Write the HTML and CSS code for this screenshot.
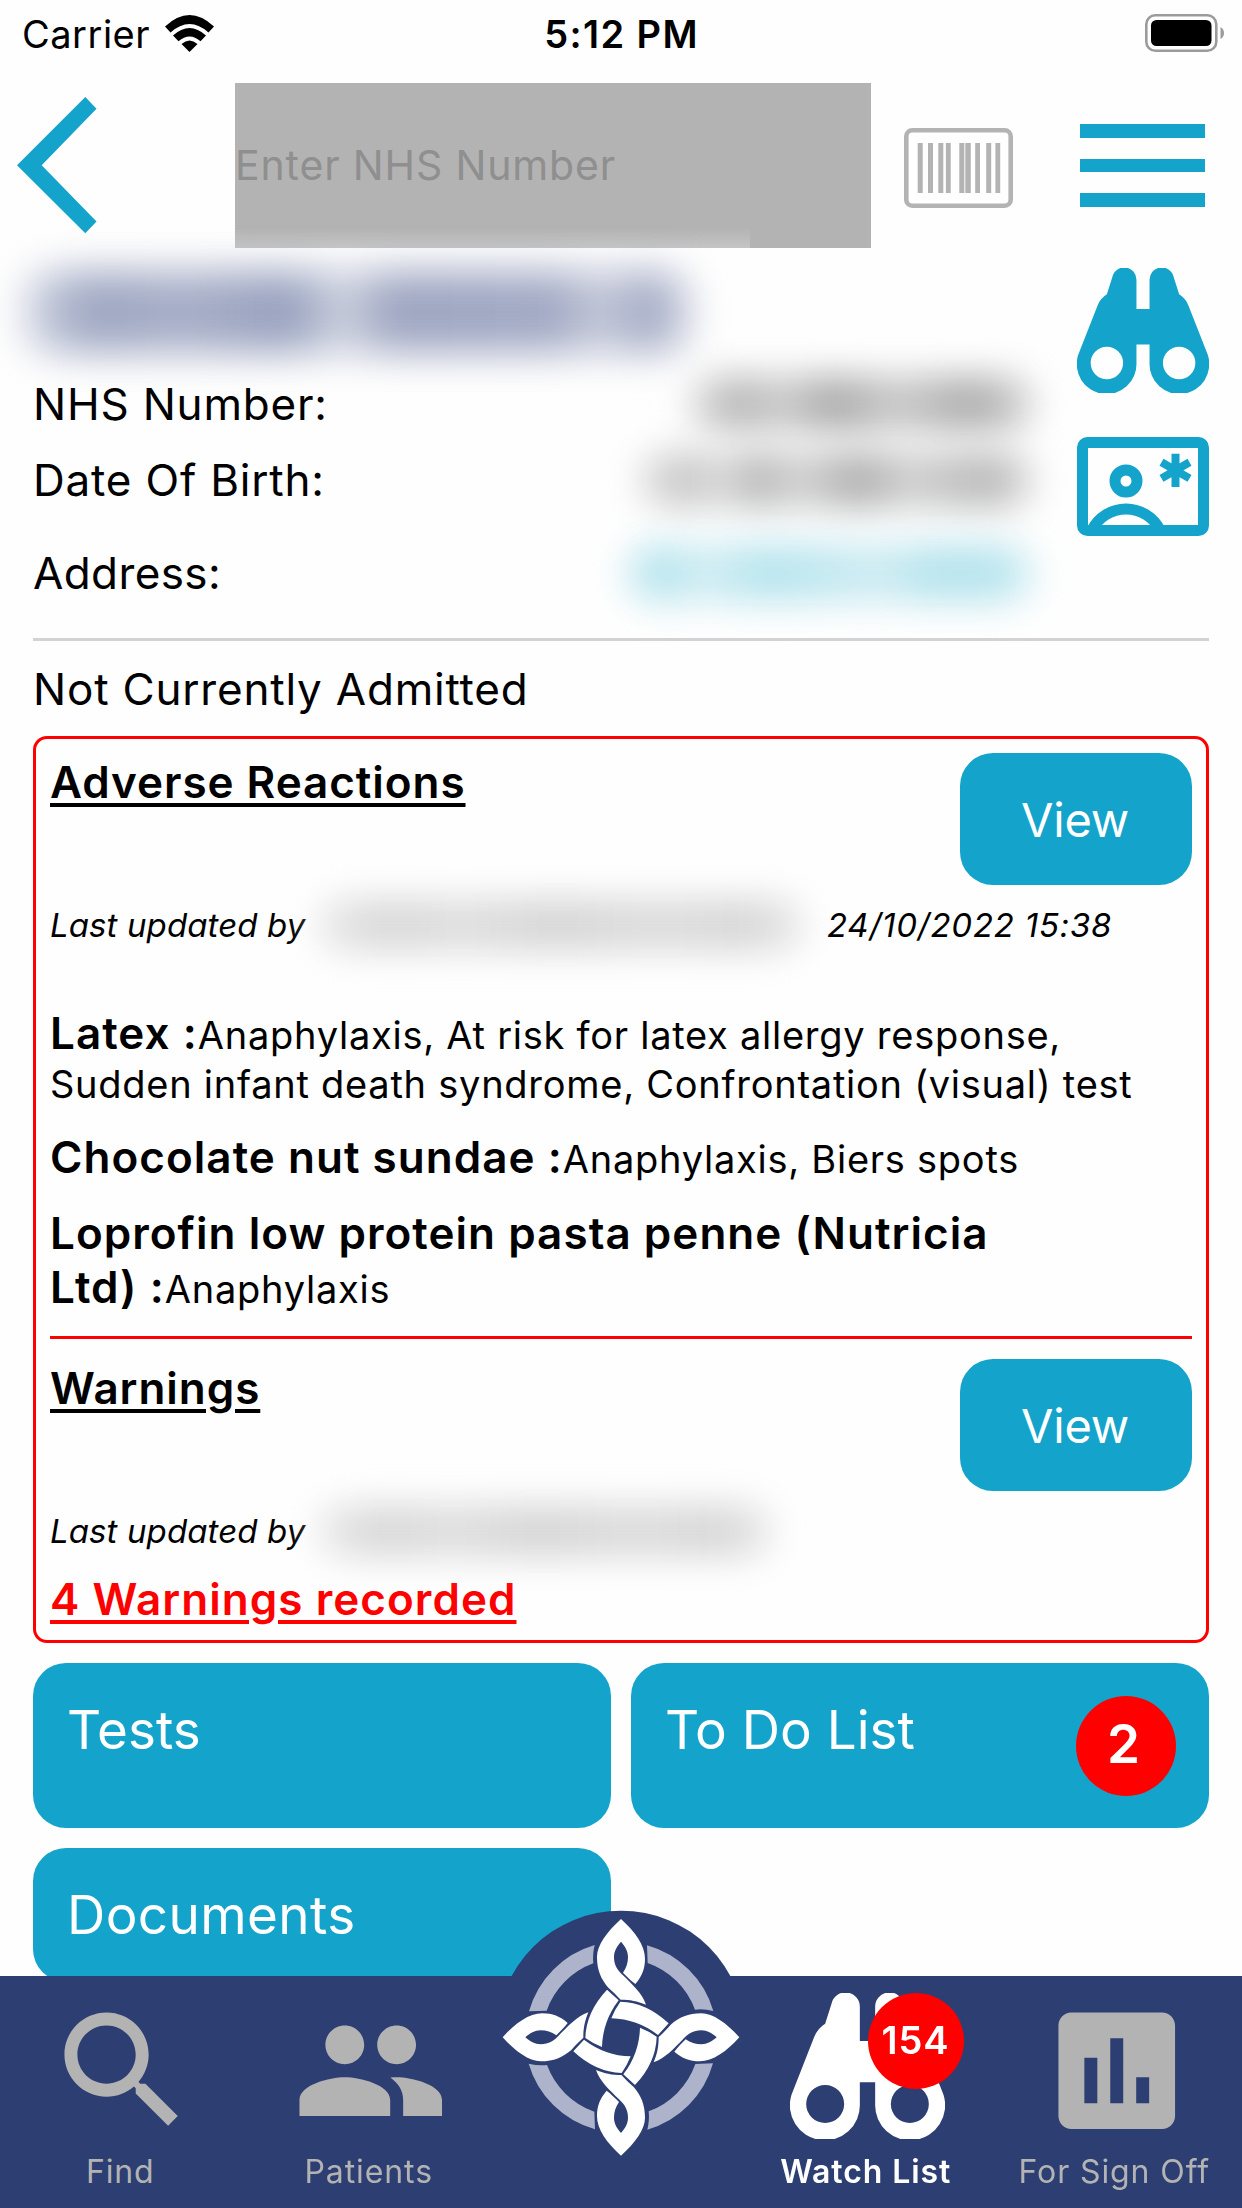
FILE: index.html
```
<!DOCTYPE html>
<html lang="en">
<head>
  <meta charset="UTF-8" />
  <meta name="viewport" content="width=device-width, initial-scale=1.0"/>
  <title>Patient Summary</title>
  <link rel="stylesheet" href="styles.css">
</head>
<body>

  <div class="status-bar">
    <div class="carrier">
      <span>Carrier</span>
      <svg class="wifi" viewBox="0 0 49 37">
        <path d="M0 11.5Q24.5-11.5 49 11.5L43.5 17.5Q24.5 .5 5.5 17.500Z"/>
        <path d="M8 20.5Q24.5 5.5 41 20.5L35.5 26.3Q24.5 16.5 13.5 26.300Z"/>
        <path d="M16.5 29Q24.5 22 32.5 29L24.5 37Z"/>
      </svg>
    </div>
    <div class="time">5:12 PM</div>
    <svg class="battery" viewBox="0 0 80 38">
      <rect x="1.3" y="1.3" width="70" height="35.4" rx="9" fill="none" stroke="#9b9b9b" stroke-width="2.6"/>
      <rect x="6" y="6" width="60.5" height="26" rx="5.5"/>
      <path d="M75.5 13Q79 15 79 19T75.5 25Z" fill="#9b9b9b"/>
    </svg>
  </div>

  <header>
    <svg class="back" viewBox="0 0 80 137">
      <path d="M68.3 0L79.5 11.7 24.7 68.3 79.5 124.5 68.3 136.3 0 68.300Z"/>
    </svg>
    <div class="search">Enter NHS Number</div>
    <svg class="barcode" viewBox="0 0 109 80">
      <rect x="2.3" y="2.3" width="104.4" height="75.4" rx="6" fill="none" stroke="#b3b3b3" stroke-width="4.6"/>
      <path d="M13.7 15h5v50h-5zM24 15h5v50h-5zM34.3 15h5v50h-5zM41.9 15h4.8v50h-4.8zM55.3 15h5v50h-5zM61.3 15h5.5v50h-5.5zM71.2 15h4.8v50h-4.8zM82.2 15h5v50h-5zM91.4 15h4.8v50h-4.8z"/>
    </svg>
    <div class="menu">
      <span></span>
      <span></span>
      <span></span>
    </div>
  </header>

  <main>
    <section class="patient">
      <div class="patient-info">
        <div class="patient-name"><span class="redacted redacted-name"></span></div>
        <div class="row">NHS Number:<span class="redacted redacted-nhs"></span></div>
        <div class="row">Date Of Birth:<span class="redacted redacted-dob"></span></div>
        <div class="row row-address">Address:<span class="redacted redacted-address"></span></div>
      </div>
      <div class="patient-icons">
        <svg class="binoculars" viewBox="0 0 464 438" preserveAspectRatio="none">
          <path fill-rule="evenodd" d="M209 43A43 43 0 0 0 124 32L105 92Q82 106 72 132L4 305A105 105 0 1 0 209 333V268H255V333A105 105 0 1 0 460 305L392 132Q382 106 359 92L340 32A43 43 0 0 0 255 43V144H209ZM48 333a57 57 0 1 0 114 0a57 57 0 1 0 -114 0ZM302 333a57 57 0 1 0 114 0a57 57 0 1 0 -114 0Z"/>
        </svg>
        <svg class="id-card" viewBox="0 0 132 99">
          <rect x="5.5" y="5.5" width="121" height="88" rx="5" fill="none" stroke="#14a3ca" stroke-width="11"/>
          <circle cx="49" cy="44" r="11" fill="none" stroke="#14a3ca" stroke-width="11"/>
          <path d="M15 93A38 38 0 0 1 83 93" fill="none" stroke="#14a3ca" stroke-width="11"/>
          <path d="M98.5 16.7v33.2M84.500 25.2l28 16.2M84.500 41.4l28-16.2" stroke="#14a3ca" stroke-width="8"/>
        </svg>
      </div>
    </section>

    <hr>
    <p class="admission">Not Currently Admitted</p>

    <section class="alerts">
      <div class="alert-head">
        <h2>Adverse Reactions</h2>
        <div class="view-btn">View</div>
      </div>
      <div class="updated">
        <span class="updated-label">Last updated by</span>
        <span class="redacted redacted-user"></span>
        <span class="updated-date">24/10/2022 15:38</span>
      </div>
      <div class="reactions">
        <p><strong>Latex :</strong>Anaphylaxis, At risk for latex allergy response,<br>Sudden infant death syndrome, Confrontation (visual) test</p>
        <p><strong>Chocolate nut sundae :</strong>Anaphylaxis, Biers spots</p>
        <p><strong>Loprofin low protein pasta penne (Nutricia<br>Ltd) :</strong>Anaphylaxis</p>
      </div>
      <div class="alert-divider"></div>
      <div class="alert-head">
        <h2>Warnings</h2>
        <div class="view-btn">View</div>
      </div>
      <div class="updated">
        <span class="updated-label">Last updated by</span>
        <span class="redacted redacted-user short"></span>
      </div>
      <div class="warning-count">4 Warnings recorded</div>
    </section>

    <section class="tiles">
      <div class="tile">Tests</div>
      <div class="tile">To Do List<span class="tile-badge">2</span></div>
      <div class="tile tile-last">Documents</div>
    </section>
  </main>

  <nav class="tab-bar">
    <!-- Central logo -->
    <svg class="logo" viewBox="32 44 780 780">
      <defs>
        <g id="knot">
          <path fill="#adb3ca" d="M500 165A288 288 0 0 1 699 362Q670 355 644 358A234 234 0 0 0 502 218Z"/>
          <path fill="#fff" d="M422 86C465 125 494 165 494 205C494 235 485 258 465 281C452 271 440 259 428 247C438 232 443 218 443 200C443 182 434 168 422 154C410 168 401 182 401 200C401 225 412 240 428 255C455 282 485 308 497 343C470 332 450 328 421 328C408 314 396 302 384 292C362 266 350 240 350 200C350 165 379 125 422 86Z"/>
          <path fill="#fff" d="M420 334Q498 336 565 399L533 434Q470 386 393 384Q404 356 420 334Z"/>
        </g>
      </defs>
      <circle cx="422" cy="434" r="373" fill="#2d3e72"/>
      <use href="#knot"/>
      <use href="#knot" transform="rotate(90 422 441)"/>
      <use href="#knot" transform="rotate(180 422 441)"/>
      <use href="#knot" transform="rotate(270 422 441)"/>
    </svg>

    <div class="tab">
      <svg viewBox="0 0 24 24"><path d="M15.5 14h-.79l-.28-.27C15.41 12.59 16 11.11 16 9.5 16 5.91 13.09 3 9.5 3S3 5.91 3 9.5 5.91 16 9.5 16c1.61 0 3.09-.59 4.23-1.57l.27.28v.79l5 4.99L20.49 19l-4.99-5zm-6 0C7.01 14 5 11.99 5 9.5S7.01 5 9.5 5 14 7.01 14 9.5 11.99 14 9.5 14z"/></svg>
      <span>Find</span>
    </div>
    <div class="tab">
      <svg viewBox="0 0 24 24"><path d="M16 11c1.66 0 2.99-1.34 2.99-3S17.66 5 16 5s-3 1.34-3 3 1.34 3 3 3zm-8 0c1.66 0 2.99-1.34 2.99-3S9.66 5 8 5 5 6.34 5 8s1.34 3 3 3zm0 2c-2.33 0-7 1.17-7 3.5V19h14v-2.5c0-2.33-4.67-3.5-7-3.5zm8 0c-.29 0-.62.02-.97.05 1.16.84 1.97 1.97 1.97 3.45V19h6v-2.5c0-2.33-4.67-3.5-7-3.5z"/></svg>
      <span>Patients</span>
    </div>
    <div class="tab"></div>
    <div class="tab active">
      <svg class="tab-binoculars" viewBox="0 0 464 438">
        <path fill-rule="evenodd" d="M209 43A43 43 0 0 0 124 32L105 92Q82 106 72 132L4 305A105 105 0 1 0 209 333V268H255V333A105 105 0 1 0 460 305L392 132Q382 106 359 92L340 32A43 43 0 0 0 255 43V144H209ZM48 333a57 57 0 1 0 114 0a57 57 0 1 0 -114 0ZM302 333a57 57 0 1 0 114 0a57 57 0 1 0 -114 0Z"/>
      </svg>
      <span>Watch List</span>
      <div class="tab-badge">154</div>
    </div>
    <div class="tab">
      <svg viewBox="0 0 24 24"><path d="M19 3H5c-1.1 0-2 .9-2 2v14c0 1.1.9 2 2 2h14c1.1 0 2-.9 2-2V5c0-1.1-.9-2-2-2zM9 17H7v-7h2v7zm4 0h-2V7h2v10zm4 0h-2v-4h2v4z"/></svg>
      <span>For Sign Off</span>
    </div>
  </nav>

</body>
</html>
```
FILE: styles.css
```
* {
  margin: 0;
  padding: 0;
  box-sizing: border-box;
}

body {
  width: 1242px;
  height: 2208px;
  overflow: hidden;
  background-color: #fefefe;
  color: #000;
  font-family: Inter, 'Helvetica Neue', sans-serif;
}

svg {
  display: block;
  flex: none;
}

/* Status bar */
.status-bar {
  display: grid;
  grid-template-columns: 1fr auto 1fr;
  align-items: center;
  height: 68px;
  padding: 0 17px 0 22px;
  font-size: 38px;
}

.carrier {
  display: flex;
  align-items: center;
  gap: 15px;
  letter-spacing: 0.5px;
}

.wifi {
  width: 49px;
  height: 37px;
  margin-bottom: 2px;
}

.time {
  margin-right: 4px;
  font-weight: 600;
  letter-spacing: 1.4px;
}

.battery {
  width: 80px;
  height: 38px;
  margin-bottom: 3px;
  justify-self: end;
}

/* Header */
header {
  display: flex;
  align-items: center;
  height: 195px;
  padding: 0 37px 0 17px;
}

.back {
  width: 80px;
  height: 137px;
  fill: #14a3ca;
}

.search {
  width: 636px;
  height: 165px;
  margin-left: 138px;
  line-height: 165px;
  font-size: 41px;
  letter-spacing: 0.85px;
  color: #8f8f8f;
  background: linear-gradient(to bottom, #b3b3b3, #c5c5c5) left bottom / 515px 20px no-repeat #b3b3b3;
}

.barcode {
  width: 109px;
  height: 80px;
  margin: 4px 0 0 33px;
  fill: #b3b3b3;
}

.menu {
  display: flex;
  flex-direction: column;
  gap: 21px;
  width: 125px;
  margin-left: auto;
}

.menu span {
  height: 13.6px;
  background-color: #14a3ca;
}

main {
  padding: 0 33px;
}

/* Patient */
.patient {
  display: flex;
  justify-content: space-between;
  height: 375px;
}

.patient-info {
  width: 1002px;
  font-size: 44px;
  letter-spacing: 0.8px;
}

.patient-name {
  display: flex;
  align-items: center;
  height: 103px;
  padding-bottom: 6px;
}

.row {
  display: flex;
  align-items: center;
  justify-content: space-between;
  height: 76px;
}

.row-address {
  height: 109px;
  letter-spacing: 0.4px;
}

/* Hidden personal details */
.redacted {
  display: block;
  flex: none;
  border-radius: 30px;
}

.redacted-name {
  width: 668px;
  height: 82px;
  margin-left: -10px;
  background: linear-gradient(90deg, #d5d9e5, #9fa7c2 10%, #a8afc8 24%, #98a1be 40%, #cfd3e0 48%, #9fa6c1 55%, #a3aac5 80%, #c6cada 86%, #a3aac5 94%, #cfd3e0);
  filter: blur(19px);
}

.redacted-nhs {
  width: 346px;
  height: 58px;
  background: linear-gradient(90deg, #dcdcdc, #b8b8b8 16%, #cfcfcf 26%, #acacac 42%, #cbcbcb 60%, #aeaeae 82%, #dadada);
  filter: blur(17px);
}

.redacted-dob {
  width: 396px;
  height: 58px;
  background: linear-gradient(90deg, #dedede, #c8c8c8 14%, #dedede 20%, #b8b8b8 30%, #d4d4d4 40%, #b0b0b0 56%, #d2d2d2 68%, #bababa 88%, #dedede);
  filter: blur(17px);
}

.redacted-address {
  width: 410px;
  height: 60px;
  background: linear-gradient(90deg, #cdecf3, #b8e5ee 10%, #d3eef4 18%, #b8e5ee 35%, #cfecf3 62%, #b9e5ee 75%, #b9e5ee 90%, #d9f1f6);
  filter: blur(17px);
}

.patient-icons {
  display: flex;
  flex-direction: column;
  gap: 44px;
  padding-top: 5px;
}

.binoculars {
  width: 132px;
  height: 125px;
  fill: #14a3ca;
}

.id-card {
  width: 132px;
  height: 99px;
}

hr {
  height: 3px;
  border: none;
  background-color: #d3d3d3;
}

.admission {
  padding-top: 1px;
  font-size: 44px;
  line-height: 94px;
  letter-spacing: 0.8px;
}

/* Alerts */
.alerts {
  padding: 14px;
  border: 3px solid #ff0000;
  border-radius: 14px;
}

.alert-head {
  display: flex;
  justify-content: space-between;
  align-items: flex-start;
}

h2 {
  font-size: 44px;
  line-height: 58px;
  font-weight: 600;
  letter-spacing: 0.95px;
  text-decoration: underline;
  text-decoration-thickness: 4px;
  text-underline-offset: 5px;
}

.view-btn {
  width: 232px;
  height: 132px;
  padding-right: 2px;
  line-height: 134px;
  border-radius: 33px;
  background-color: #14a3ca;
  color: white;
  font-size: 47px;
  letter-spacing: -0.2px;
  text-align: center;
}

.updated {
  display: flex;
  align-items: center;
  height: 46px;
  margin-top: 17px;
  font-size: 33px;
  font-style: italic;
}

.updated-label {
  width: 266px;
  letter-spacing: 0.1px;
}

.updated-date {
  margin-left: 21px;
  letter-spacing: 0.75px;
}

.redacted-user {
  width: 490px;
  height: 56px;
  background: linear-gradient(90deg, #ececec, #dadada 14%, #e0e0e0 30%, #d8d8d8 48%, #dedede 70%, #d9d9d9 88%, #ececec);
  filter: blur(16px);
}

.redacted-user.short {
  width: 458px;
}

.reactions {
  display: flex;
  flex-direction: column;
  gap: 22px;
  margin-top: 58px;
}

.reactions p {
  font-size: 38px;
  line-height: 48px;
  letter-spacing: 0.74px;
}

.reactions strong {
  font-size: 44px;
  line-height: 54px;
  font-weight: 600;
  letter-spacing: 1.04px;
}

.alert-divider {
  height: 3px;
  margin: 22px 0 20px;
  background-color: #ff0000;
}

.warning-count {
  margin-top: 18px;
  font-size: 44px;
  line-height: 54px;
  font-weight: 600;
  letter-spacing: 1.05px;
  color: #ff0000;
  text-decoration: underline;
  text-decoration-thickness: 4px;
  text-underline-offset: 5px;
}

/* Tiles */
.tiles {
  display: grid;
  grid-template-columns: 1fr 1fr;
  grid-auto-rows: 165px;
  gap: 20px;
  margin-top: 20px;
}

.tile {
  position: relative;
  padding: 35px 34px;
  border-radius: 33px;
  background-color: #14a3ca;
  color: white;
  font-size: 53px;
  line-height: 64px;
}

.tile-last {
  height: 134px;
  letter-spacing: 0.4px;
}

.tile-badge {
  position: absolute;
  top: 33px;
  right: 33px;
  width: 100px;
  height: 100px;
  line-height: 96px;
  padding-right: 5px;
  border-radius: 50%;
  background-color: #ff0000;
  font-weight: 600;
  text-align: center;
}

/* Tab bar */
.tab-bar {
  position: fixed;
  left: 0;
  bottom: 0;
  display: grid;
  grid-template-columns: repeat(5, 248.5px);
  width: 1242px;
  height: 232px;
  background-color: #2d3e72;
}

.logo {
  position: absolute;
  top: -71px;
  left: 491px;
  width: 260px;
  height: 260px;
}

.tab {
  position: relative;
  display: flex;
  flex-direction: column;
  align-items: center;
  padding: 17px 4px 0 0;
  color: #b3b3b3;
  font-size: 32px;
  line-height: 40px;
  letter-spacing: 0.9px;
}

.tab svg {
  width: 155.5px;
  height: 155.5px;
  fill: #b3b3b3;
}

.tab span {
  margin: 3px 4px 0 0;
}

.tab.active {
  color: white;
  font-weight: 600;
}

.tab .tab-binoculars {
  width: 155px;
  height: 146px;
  margin-bottom: 9.5px;
  fill: white;
}

.tab-badge {
  position: absolute;
  top: 17px;
  left: 122px;
  width: 96px;
  height: 96px;
  line-height: 94px;
  border-radius: 50%;
  background-color: #ff0000;
  font-size: 38px;
  text-align: center;
}
```
